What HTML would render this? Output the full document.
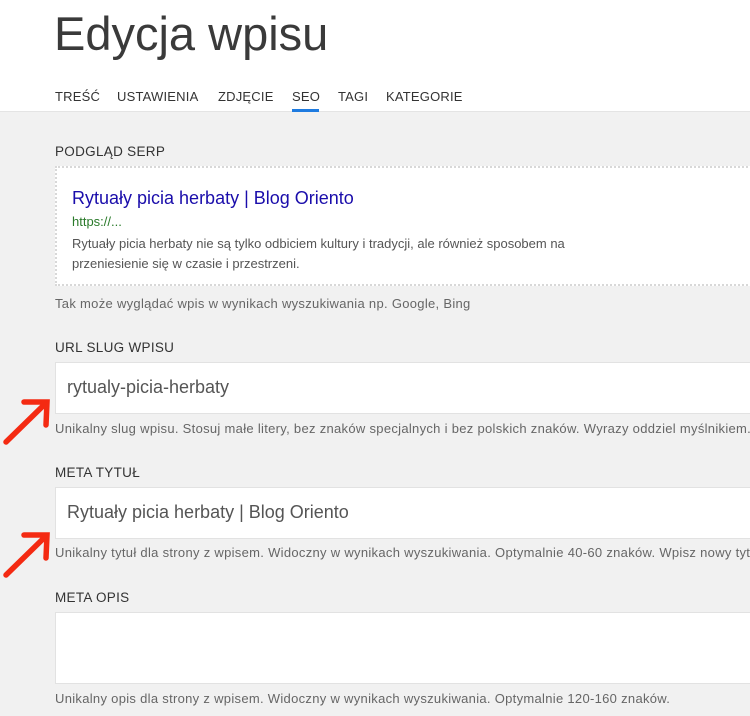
<!DOCTYPE html><html><head><meta charset="utf-8"><style>
body{margin:0;width:750px;height:716px;overflow:hidden;background:#f1f1f1;font-family:"Liberation Sans",sans-serif;position:relative}
.hdr{position:absolute;left:0;top:0;width:750px;height:111px;background:#fff;border-bottom:1px solid #e4e4e4}
.t{position:absolute;left:54px;top:6px;font-size:47px;font-weight:300;color:#3a3a3a}
.tab{position:absolute;top:89px;font-size:13px;color:#333;letter-spacing:0.2px}
.ul{position:absolute;left:292px;top:109px;width:27px;height:3px;background:#1e7be0}
.a{position:absolute;left:55px;white-space:nowrap}
.lab{font-size:13.5px;color:#333;letter-spacing:0.3px}
.help{font-size:13px;color:#666;letter-spacing:0.3px}
.box{position:absolute;left:55px;width:720px;background:#fff;border:1px solid #e2e2e2}
.in{font-size:18px;color:#555;position:absolute;left:11px}
</style></head><body>
<div class="hdr">
<div class="t">Edycja wpisu</div>
<div class="tab" style="left:55px">TREŚĆ</div>
<div class="tab" style="left:117px">USTAWIENIA</div>
<div class="tab" style="left:218px">ZDJĘCIE</div>
<div class="tab" style="left:292px">SEO</div>
<div class="tab" style="left:338px">TAGI</div>
<div class="tab" style="left:386px">KATEGORIE</div>
<div class="ul"></div>
</div>
<div class="a lab" style="top:144px">PODGLĄD SERP</div>
<div style="position:absolute;left:55px;top:166px;width:720px;height:120px;background:#fff;border:2px dotted #d8d8d8;box-sizing:border-box"></div>
<div class="a" style="left:72px;top:188px;font-size:18px;color:#1a0dab">Rytuały picia herbaty | Blog Oriento</div>
<div class="a" style="left:72px;top:214px;font-size:13px;color:#2a7a2a">https://...</div>
<div class="a" style="left:72px;top:234px;font-size:13px;color:#555;line-height:20px">Rytuały picia herbaty nie są tylko odbiciem kultury i tradycji, ale również sposobem na<br>przeniesienie się w czasie i przestrzeni.</div>
<div class="a help" style="top:296px">Tak może wyglądać wpis w wynikach wyszukiwania np. Google, Bing</div>
<div class="a lab" style="top:340px">URL SLUG WPISU</div>
<div class="box" style="top:362px;height:50px"><div class="in" style="top:14px">rytualy-picia-herbaty</div></div>
<div class="a help" style="top:421px">Unikalny slug wpisu. Stosuj małe litery, bez znaków specjalnych i bez polskich znaków. Wyrazy oddziel myślnikiem.</div>
<div class="a lab" style="top:465px">META TYTUŁ</div>
<div class="box" style="top:487px;height:50px"><div class="in" style="top:14px">Rytuały picia herbaty | Blog Oriento</div></div>
<div class="a help" style="top:545px">Unikalny tytuł dla strony z wpisem. Widoczny w wynikach wyszukiwania. Optymalnie 40-60 znaków. Wpisz nowy tytuł</div>
<div class="a lab" style="top:590px">META OPIS</div>
<div class="box" style="top:612px;height:70px"></div>
<div class="a help" style="top:691px">Unikalny opis dla strony z wpisem. Widoczny w wynikach wyszukiwania. Optymalnie 120-160 znaków.</div>
<svg style="position:absolute;left:0;top:390px" width="60" height="200" viewBox="0 0 60 200">
<g stroke="#f42a12" stroke-width="5.5" stroke-linecap="round" fill="none">
<path d="M6 52 L46 13 M24 12 L47 12 L46 35"/>
<path d="M6 185 L46 146 M24 145 L47 145 L46 168"/>
</g></svg>
</body></html>
